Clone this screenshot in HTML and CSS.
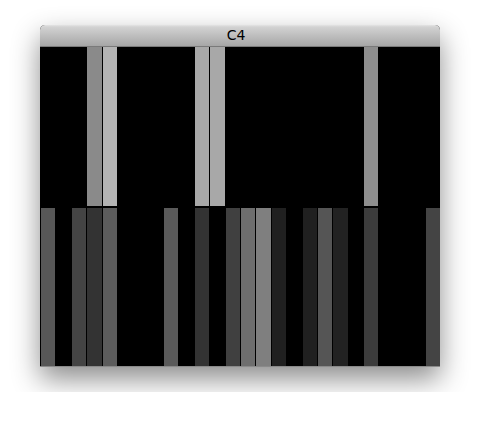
FILE: index.html
```html
<!DOCTYPE html>
<html lang="en">
<head>
  <meta charset="UTF-8">
  <title>C4</title>
  <link rel="stylesheet" href="styles.css">
</head>
<body>

  <div id="window">
    <div id="titlebar">C4</div>
    <div id="stage">
      <div class="row" id="top"></div>
      <div class="row" id="bottom"></div>
    </div>
  </div>

  <script>
    // grey level per column, 0 = silent
    const topRow = {3: 138, 4: 180, 10: 168, 11: 168, 21: 142}
    const bottomRow = {
      0: 87, 2: 68, 3: 51, 4: 92, 8: 90, 10: 51, 12: 64, 13: 110,
      14: 127, 15: 32, 17: 32, 18: 85, 19: 34, 21: 60, 25: 68
    }

    function fill(id, values){
      const row = document.getElementById(id)
      for(let i = 0; i < 26; i++){
        const cell = document.createElement("div")
        cell.className = "cell"
        const v = values[i]
        if(v){
          cell.style.backgroundColor = "rgb(" + v + "," + v + "," + v + ")"
        }
        row.appendChild(cell)
      }
    }

    fill("top", topRow)
    fill("bottom", bottomRow)
  </script>

</body>
</html>
```

FILE: styles.css
```css
*{
  margin: 0;
  padding: 0;
  box-sizing: border-box;
}

body{
  background-color: #ffffff;
  padding: 25px 40px;
}

#window{
  width: 400px;
  border-radius: 5px 5px 0 0;
  box-shadow: 0 12px 28px rgba(0, 0, 0, 0.45);
  background-color: #000000;
  border-bottom: 1px solid #8a8a8a;
}

#titlebar{
  height: 22px;
  padding-top: 2px;
  line-height: 19px;
  text-align: center;
  font: 14px "DejaVu Sans", sans-serif;
  color: #000000;
  padding-right: 8px;
  border-radius: 5px 5px 0 0;
  background: linear-gradient(#e4e4e4, #d2d2d2 2px, #a6a6a6);
  border-bottom: 1px solid #7a7a7a;
}

#stage{
  height: 319px;
  display: grid;
  grid-template-rows: 1fr 1fr;
  row-gap: 2px;
}

.row{
  display: grid;
  grid-template-columns: repeat(26, 1fr);
}

.cell{
  margin-left: 1px;
  background-color: #000000;
}
```
